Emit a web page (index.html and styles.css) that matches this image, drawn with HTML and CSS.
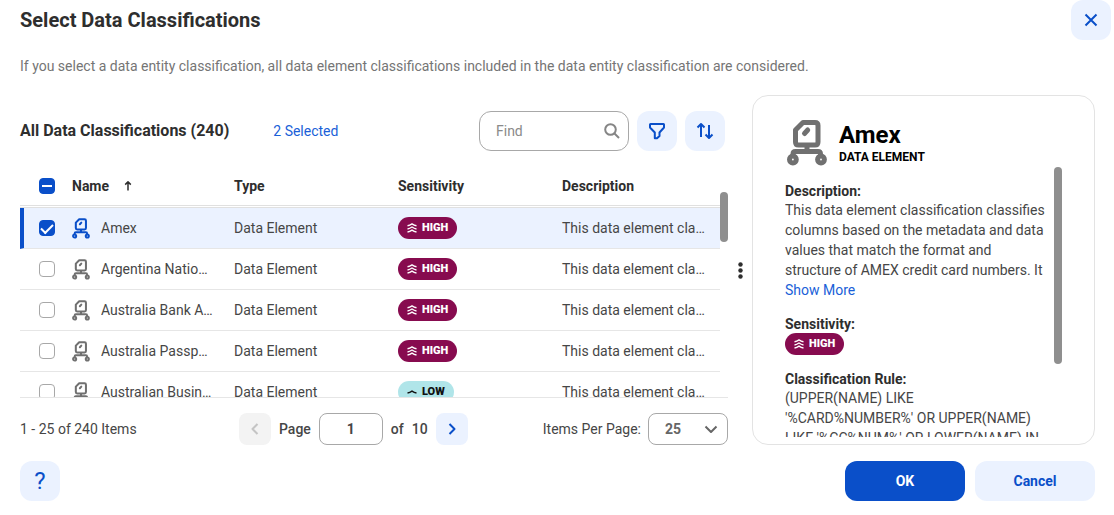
FILE: index.html
```html
<!DOCTYPE html>
<html lang="en">
<head>
    <meta charset="UTF-8">
    <meta name="viewport" content="width=device-width, initial-scale=1.0">
    <title>Select Data Classifications</title>
    <link rel="stylesheet" href="styles.css">
</head>
<body>

<!-- Shared icons -->
<svg class="sprite" width="0" height="0" aria-hidden="true">
    <symbol id="icon-element" viewBox="0 0 40 46">
        <path d="M16 2.500 H28 Q31 2.500 31 5.500 V22 Q31 25 28 25 H11.500 Q8.500 25 8.500 22 V10 Z M20 25 V31.500 M6 35 V34 Q6 31.500 8.500 31.500 H31 Q33.500 31.500 33.500 34 V35" />
        <path d="M17.500 13.500 L20.700 10" />
        <circle cx="5.900" cy="39.500" r="3.400" />
        <circle cx="34" cy="39.500" r="3.400" />
    </symbol>
    <symbol id="icon-high" viewBox="0 0 10 10">
        <path d="M.5 2.800 Q2.800 2.400 5 .9 Q7.200 2.400 9.500 2.800 M.5 5.900 Q2.800 5.500 5 4 Q7.200 5.500 9.500 5.900 M.5 9 Q2.800 8.600 5 7.100 Q7.200 8.600 9.500 9" />
    </symbol>
    <symbol id="icon-low" viewBox="0 0 10 10">
        <path d="M.5 6 Q2.800 5.600 5 4.100 Q7.200 5.600 9.500 6" />
    </symbol>
</svg>

<div class="dialog">
    <header class="dialog-header">
        <h1>Select Data Classifications</h1>
        <button class="icon-button" aria-label="Close">
            <svg width="14" height="14" viewBox="0 0 14 14"><path d="M1.500 1.500 L12.500 12.500 M12.500 1.500 L1.500 12.500" /></svg>
        </button>
    </header>

    <p class="intro">If you select a data entity classification, all data element classifications included in the data entity classification are considered.</p>

    <main class="content">
        <section class="list">
            <div class="toolbar">
                <h2>All Data Classifications (240)</h2>
                <a class="link" href="#">2 Selected</a>
                <div class="toolbar-actions">
                    <div class="search">
                        <input type="text" placeholder="Find" aria-label="Find">
                        <svg width="16" height="16" viewBox="0 0 16 16"><circle cx="6.500" cy="6.500" r="5.300" /><path d="M10.500 10.500 L15 15" /></svg>
                    </div>
                    <button class="icon-button" aria-label="Filter">
                        <svg width="18" height="18" viewBox="0 0 18 18"><path d="M2.500 2 H15.500 Q16 2 16 2.500 V5.500 L11.500 10.500 V14 L9 16.300 H6.800 V10.500 L2 5.500 V2.500 Q2 2 2.500 2 Z" /></svg>
                    </button>
                    <button class="icon-button" aria-label="Sort">
                        <svg width="18" height="18" viewBox="0 0 18 18"><path d="M5 15 V2 M1.500 5.500 L5 2 L8.500 5.500 M13 3 V16 M9.500 12.500 L13 16 L16.500 12.500" /></svg>
                    </button>
                </div>
            </div>

            <div class="table-area">
                <table>
                    <thead>
                        <tr>
                            <th class="col-check"><input type="checkbox" class="checkbox partial" aria-label="Select all"></th>
                            <th class="col-name">
                                <span class="sort-label">Name <svg class="sort-arrow" width="8" height="10" viewBox="0 0 8 10"><path d="M4 9.500 V1 M1.200 3.600 L4 .9 L6.800 3.600" /></svg></span>
                            </th>
                            <th class="col-type">Type</th>
                            <th class="col-sensitivity">Sensitivity</th>
                            <th class="col-description">Description</th>
                        </tr>
                    </thead>
                    <tbody>
                        <tr class="selected">
                            <td class="col-check"><input type="checkbox" class="checkbox" aria-label="Amex" checked></td>
                            <td><div class="name"><svg class="element-icon"><use href="#icon-element" /></svg><span>Amex</span></div></td>
                            <td>Data Element</td>
                            <td><span class="pill high"><svg><use href="#icon-high" /></svg>HIGH</span></td>
                            <td>This data element classification classifies</td>
                        </tr>
                        <tr>
                            <td class="col-check"><input type="checkbox" class="checkbox" aria-label="Argentina National Identity"></td>
                            <td><div class="name"><svg class="element-icon"><use href="#icon-element" /></svg><span>Argentina National Identity</span></div></td>
                            <td>Data Element</td>
                            <td><span class="pill high"><svg><use href="#icon-high" /></svg>HIGH</span></td>
                            <td>This data element classification classifies</td>
                        </tr>
                        <tr>
                            <td class="col-check"><input type="checkbox" class="checkbox" aria-label="Australia Bank Account"></td>
                            <td><div class="name"><svg class="element-icon"><use href="#icon-element" /></svg><span>Australia Bank Account</span></div></td>
                            <td>Data Element</td>
                            <td><span class="pill high"><svg><use href="#icon-high" /></svg>HIGH</span></td>
                            <td>This data element classification classifies</td>
                        </tr>
                        <tr>
                            <td class="col-check"><input type="checkbox" class="checkbox" aria-label="Australia Passport Number"></td>
                            <td><div class="name"><svg class="element-icon"><use href="#icon-element" /></svg><span>Australia Passport Number</span></div></td>
                            <td>Data Element</td>
                            <td><span class="pill high"><svg><use href="#icon-high" /></svg>HIGH</span></td>
                            <td>This data element classification classifies</td>
                        </tr>
                        <tr>
                            <td class="col-check"><input type="checkbox" class="checkbox" aria-label="Australian Business Number"></td>
                            <td><div class="name"><svg class="element-icon"><use href="#icon-element" /></svg><span>Australian Business Number</span></div></td>
                            <td>Data Element</td>
                            <td><span class="pill low"><svg><use href="#icon-low" /></svg>LOW</span></td>
                            <td>This data element classification classifies</td>
                        </tr>
                    </tbody>
                </table>
                <div class="scrollbar"><div class="thumb"></div></div>
            </div>

            <div class="pagination">
                <span class="range">1 - 25 of 240 Items</span>
                <div class="pager">
                    <button class="page-button" aria-label="Previous page" disabled>
                        <svg width="8" height="12" viewBox="0 0 8 12"><path d="M6.500 1 L1.500 6 L6.500 11" /></svg>
                    </button>
                    <label for="page">Page</label>
                    <input type="text" id="page" value="1">
                    <span>of</span>
                    <span>10</span>
                    <button class="page-button" aria-label="Next page">
                        <svg width="8" height="12" viewBox="0 0 8 12"><path d="M1.500 1 L6.500 6 L1.500 11" /></svg>
                    </button>
                </div>
                <div class="page-size">
                    <label for="page-size">Items Per Page:</label>
                    <div class="select">
                        <select id="page-size">
                            <option>25</option>
                            <option>50</option>
                            <option>100</option>
                        </select>
                        <svg width="14" height="9" viewBox="0 0 14 9"><path d="M1.500 1.500 L7 7 L12.500 1.500" /></svg>
                    </div>
                </div>
            </div>
        </section>

        <button class="splitter" aria-label="Resize panels">
            <svg width="5" height="17" viewBox="0 0 5 17"><circle cx="2.500" cy="2.500" r="2.200" /><circle cx="2.500" cy="8.500" r="2.200" /><circle cx="2.500" cy="14.500" r="2.200" /></svg>
        </button>

        <aside class="details">
            <div class="details-header">
                <svg class="details-icon"><use href="#icon-element" /></svg>
                <div>
                    <h2>Amex</h2>
                    <p>DATA ELEMENT</p>
                </div>
            </div>
            <div class="details-body">
                <div class="details-text">
                    <h3>Description:</h3>
                    <p>This data element classification classifies columns based on the metadata and data values that match the format and structure of AMEX credit card numbers. It</p>
                    <a class="link" href="#">Show More</a>
                    <h3>Sensitivity:</h3>
                    <span class="pill high"><svg><use href="#icon-high" /></svg>HIGH</span>
                    <h3>Classification Rule:</h3>
                    <p>(UPPER(NAME) LIKE<br>'%CARD%NUMBER%' OR UPPER(NAME)<br>LIKE '%CC%NUM%' OR LOWER(NAME) IN</p>
                </div>
                <div class="scrollbar"><div class="thumb"></div></div>
            </div>
        </aside>
    </main>

    <footer class="dialog-footer">
        <button class="icon-button help" aria-label="Help">?</button>
        <div class="footer-actions">
            <button class="button primary">OK</button>
            <button class="button">Cancel</button>
        </div>
    </footer>
</div>

</body>
</html>
```
FILE: styles.css
```css
* {
    box-sizing: border-box;
}

body {
    margin: 0;
    background-color: #fff;
    color: #464646;
    font-family: Roboto, "Liberation Sans", sans-serif;
    font-size: 14px;
    line-height: 20px;
}

h1, h2, h3, p {
    margin: 0;
}

button, input, select {
    font-family: inherit;
    font-size: 14px;
}

button {
    border: none;
    padding: 0;
    cursor: pointer;
}

svg {
    display: block;
    flex: none;
    fill: none;
    stroke: currentColor;
    stroke-width: 2;
    stroke-linejoin: round;
}

.sprite {
    position: absolute;
}

.link {
    color: #1a5fd8;
    text-decoration: none;
}

/* Dialog */
.dialog-header {
    display: flex;
    justify-content: space-between;
    align-items: center;
    padding: 0 3px 0 20px;
}

.dialog-header h1 {
    font-size: 20px;
    line-height: 24px;
    font-weight: 700;
    color: #2e2e2e;
}

.intro {
    padding: 16px 20px 0;
    color: #757575;
}

.icon-button {
    display: flex;
    justify-content: center;
    align-items: center;
    width: 40px;
    height: 40px;
    border-radius: 12px;
    background-color: #ebf2ff;
    color: #0a4fc9;
}

.content {
    display: grid;
    grid-template-columns: minmax(0, 1fr) 24px 343px;
    padding: 19px 19px 0 20px;
}

.toolbar {
    display: flex;
    align-items: center;
    padding: 16px 3px 16px 0;
}

.toolbar h2 {
    margin-right: 44px;
    font-size: 16px;
    font-weight: 700;
    color: #2e2e2e;
}

.toolbar-actions {
    display: flex;
    gap: 8px;
    margin-left: auto;
}

.search {
    position: relative;
    width: 150px;
}

.search input {
    width: 100%;
    height: 40px;
    padding: 0 36px 0 16px;
    border: 1px solid #a8a8a8;
    border-radius: 12px;
    color: #464646;
}

.search input::placeholder {
    color: #8a8a8a;
}

.search svg {
    position: absolute;
    top: 12px;
    right: 9px;
    color: #858585;
}

/* Table */
.table-area {
    display: flex;
    height: 231px;
    border-bottom: 1px solid #e6e6e6;
    overflow: hidden;
}

table {
    flex: 1;
    width: 0;
    height: 246px;
    table-layout: fixed;
    border-collapse: separate;
    border-spacing: 0;
}

th, td {
    height: 41px;
    padding: 0 12px;
    border-bottom: 1px solid #e6e6e6;
    text-align: left;
    white-space: nowrap;
    overflow: hidden;
    text-overflow: ellipsis;
}

th {
    border-bottom: 3px double #e0e0e0;
    font-weight: 700;
    color: #2e2e2e;
}

.col-check {
    width: 40px;
    padding: 0 0 0 19px;
}

.col-name {
    width: 162px;
}

td:nth-child(2) {
    padding-right: 8px;
}

.col-type, .col-sensitivity {
    width: 164px;
}

.sort-label {
    display: flex;
    align-items: center;
    gap: 15px;
}

.sort-arrow {
    stroke-width: 1.500;
}

.selected td {
    background-color: #ebf2ff;
}

.selected .col-check {
    padding-left: 15px;
    border-left: 4px solid #0a4fc9;
}

.name {
    display: flex;
    align-items: center;
    gap: 11px;
}

.name span {
    overflow: hidden;
    text-overflow: ellipsis;
}

.element-icon {
    width: 18px;
    height: 21px;
    stroke-width: 4.500;
    stroke-linecap: round;
    color: #707070;
}

.selected .element-icon {
    color: #0a4fc9;
}

.checkbox {
    display: flex;
    justify-content: center;
    align-items: center;
    appearance: none;
    width: 16px;
    height: 16px;
    margin: 0;
    border: 1px solid #a8a8a8;
    border-radius: 4px;
    background-color: #fff;
}

.checkbox:checked, .checkbox.partial {
    border-color: #0a4fc9;
    background-color: #0a4fc9;
}

.checkbox:checked::before {
    content: "";
    width: 10px;
    height: 5px;
    border-left: 2px solid #fff;
    border-bottom: 2px solid #fff;
    transform: translateY(-1px) rotate(-45deg);
}

.checkbox.partial::before {
    content: "";
    width: 10px;
    height: 2px;
    background-color: #fff;
}

.pill {
    display: inline-flex;
    align-items: center;
    gap: 5px;
    height: 22px;
    padding: 0 9px;
    border-radius: 11px;
    font-size: 11px;
    line-height: 22px;
    font-weight: 900;
    vertical-align: middle;
}

.pill svg {
    width: 10px;
    height: 10px;
    stroke-width: 1.500;
}

.high {
    background-color: #870b4f;
    color: #fff;
}

.low {
    background-color: #b0e5e9;
    color: #111;
}

.scrollbar {
    flex: none;
    width: 8px;
    padding-top: 25px;
}

.thumb {
    height: 50px;
    border-radius: 4px;
    background-color: #8f8f8f;
}

/* Pagination */
.pagination, .pager, .page-size {
    display: flex;
    align-items: center;
}

.pagination {
    padding-top: 15px;
}

.range {
    width: 219px;
}

.pager {
    gap: 8px;
    font-weight: 500;
}

.pager input {
    width: 64px;
    height: 32px;
    border: 1px solid #a8a8a8;
    border-radius: 8px;
    color: #464646;
    font-weight: 700;
    text-align: center;
}

.page-button {
    display: flex;
    justify-content: center;
    align-items: center;
    width: 32px;
    height: 32px;
    border-radius: 8px;
    background-color: #ebf2ff;
    color: #0a4fc9;
}

.page-button:disabled {
    background-color: #f3f3f3;
    color: #c4c4c4;
}

.page-size {
    gap: 7px;
    margin-left: auto;
}

.select {
    position: relative;
    width: 80px;
}

.select select {
    appearance: none;
    width: 100%;
    height: 32px;
    padding: 0 30px 0 16px;
    border: 1px solid #a8a8a8;
    border-radius: 8px;
    background-color: #fff;
    color: #666;
    font-weight: 700;
}

.select svg {
    position: absolute;
    top: 12px;
    right: 10px;
    color: #666;
    pointer-events: none;
}

.splitter {
    display: flex;
    justify-content: center;
    align-items: center;
    background: none;
    color: #2e2e2e;
}

.splitter svg {
    fill: currentColor;
    stroke: none;
}

/* Details */
.details {
    height: 350px;
    padding: 24px 32px 8px;
    border: 1px solid #e3e3e3;
    border-radius: 16px;
}

.details-header {
    display: flex;
    gap: 12px;
    height: 47px;
    padding-left: 2px;
    color: #000;
}

.details-icon {
    width: 40px;
    height: 46px;
    stroke-width: 5;
    stroke-linecap: round;
    color: #707070;
}

.details-header h2 {
    padding-top: 3px;
    font-size: 24px;
    line-height: 24px;
    font-weight: 700;
}

.details-header p {
    font-size: 12px;
    font-weight: 700;
}

.details-body {
    display: flex;
    gap: 8px;
    height: 270px;
    overflow: hidden;
}

.details-text {
    flex: 1;
    min-width: 0;
    padding-top: 16px;
}

.details-text h3 {
    font-size: 14px;
    line-height: 17px;
    font-weight: 700;
    color: #2e2e2e;
}

.details-text .link {
    display: block;
    margin-bottom: 16px;
}

.details-text .pill {
    display: flex;
    width: fit-content;
    margin-bottom: 16px;
}

.details .scrollbar {
    padding-top: 0;
}

.details .thumb {
    height: 197px;
}

/* Footer */
.dialog-footer {
    display: flex;
    justify-content: space-between;
    padding: 16px 19px 14px 20px;
}

.help {
    font-size: 24px;
}

.footer-actions {
    display: flex;
    gap: 10px;
}

.button {
    width: 120px;
    height: 40px;
    border-radius: 12px;
    background-color: #ebf2ff;
    color: #0a4fc9;
    font-weight: 700;
}

.button.primary {
    background-color: #0a4fc9;
    color: #fff;
}
```
